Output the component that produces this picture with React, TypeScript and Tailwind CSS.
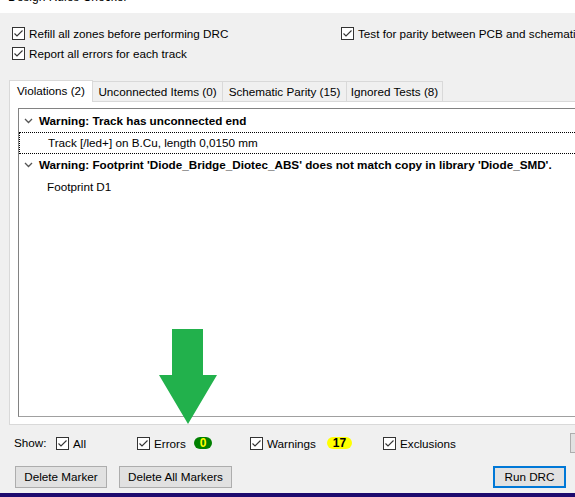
import React from "react";

function Check() {
  return (
    <span className="inline-block w-[13px] h-[13px] border border-[#333333] bg-white shrink-0 relative">
      <svg width="11" height="11" viewBox="0 0 11 11" className="absolute left-0 top-0">
        <path d="M1.5 5.5 L4 8 L9.5 2.5" fill="none" stroke="#333333" strokeWidth="1.1" />
      </svg>
    </span>
  );
}

function CheckItem({ label }: { label: string }) {
  return (
    <div className="flex items-center h-[13px]">
      <Check />
      <span className="ml-[4px] whitespace-nowrap leading-[13px]">{label}</span>
    </div>
  );
}

function Chevron() {
  return (
    <svg width="9" height="6" viewBox="0 0 9 6" className="shrink-0">
      <path d="M1 1 L4.5 4.5 L8 1" fill="none" stroke="#555" strokeWidth="1.3" />
    </svg>
  );
}

function Button({ label, w, active }: { label: string; w: string; active?: boolean }) {
  return (
    <div
      className={
        "h-[22px] flex items-center justify-center bg-[#e1e1e1] whitespace-nowrap " +
        w +
        (active ? " border-2 border-[#0078d7]" : " border border-[#adadad]")
      }
    >
      {label}
    </div>
  );
}

export default function App() {
  return (
    <div
      className="relative w-[575px] h-[497px] overflow-hidden bg-[#f0f0f0] flex flex-col text-[11.7px] text-black"
      style={{ fontFamily: '"Liberation Sans", Arial, sans-serif' }}
    >
      {/* title bar */}
      <div className="h-[13px] bg-white overflow-hidden shrink-0">
        <div className="mt-[-11px] ml-[8px] text-[12px] leading-[16px] whitespace-nowrap">Design Rules Checker</div>
      </div>

      {/* options */}
      <div className="mt-[14px] ml-[12px] grid grid-cols-[329px_1fr] gap-y-[7px] shrink-0">
        <CheckItem label="Refill all zones before performing DRC" />
        <CheckItem label="Test for parity between PCB and schematic" />
        <CheckItem label="Report all errors for each track" />
        <div />
      </div>

      {/* tabs */}
      <div className="mt-[19px] ml-[9px] flex items-end h-[22px] shrink-0">
        <div className="w-[84px] shrink-0 h-[22px] bg-white border border-[#d9d9d9] border-b-0 flex items-center justify-center relative z-10 mb-[-1px] pb-[1px]">
          Violations (2)
        </div>
        <div className="w-[130px] shrink-0 h-[20px] border border-[#d9d9d9] border-l-0 border-b-0 flex items-center justify-center">
          Unconnected Items (0)
        </div>
        <div className="w-[124px] shrink-0 h-[20px] border border-[#d9d9d9] border-l-0 border-b-0 flex items-center justify-center">
          Schematic Parity (15)
        </div>
        <div className="w-[96px] shrink-0 h-[20px] border border-[#d9d9d9] border-l-0 border-b-0 flex items-center justify-center">
          Ignored Tests (8)
        </div>
      </div>

      {/* panel */}
      <div className="ml-[9px] h-[324px] bg-white border border-[#d9d9d9] border-r-0 shrink-0 pt-[6px] pl-[8px]">
        <div className="h-[309px] border border-[#a0a0a0] border-t-[#828282] border-l-[#828282] border-r-0 pt-[1px]">
          <div className="h-[22px] flex items-center pl-[5px] font-bold whitespace-nowrap">
            <Chevron />
            <span className="ml-[6px]">Warning: Track has unconnected end</span>
          </div>
          <div className="h-[22px] flex items-center pl-[28px] whitespace-nowrap border border-dotted border-black border-r-0">
            Track [/led+] on B.Cu, length 0,0150 mm
          </div>
          <div className="h-[22px] flex items-center pl-[5px] font-bold whitespace-nowrap">
            <Chevron />
            <span className="ml-[6px]">
              Warning: Footprint 'Diode_Bridge_Diotec_ABS' does not match copy in library 'Diode_SMD'.
            </span>
          </div>
          <div className="h-[22px] flex items-center pl-[28px] whitespace-nowrap">Footprint D1</div>
        </div>
      </div>

      {/* show row */}
      <div className="mt-[8px] h-[20px] flex items-center shrink-0 whitespace-nowrap">
        <div className="ml-[14px] w-[42px] shrink-0">Show:</div>
        <div className="w-[81px] shrink-0"><CheckItem label="All" /></div>
        <div className="w-[57px] shrink-0"><CheckItem label="Errors" /></div>
        <div className="w-[56px] shrink-0 flex items-center">
          <span className="inline-flex items-center justify-center w-[18px] h-[12px] rounded-full bg-[#008000] text-[#ffff00] font-bold leading-[12px] text-[12px]">
            0
          </span>
        </div>
        <div className="w-[77px] shrink-0"><CheckItem label="Warnings" /></div>
        <div className="w-[56px] shrink-0 flex items-center">
          <span className="inline-flex items-center justify-center w-[25px] h-[12px] rounded-full bg-[#ffff00] text-black font-bold leading-[12px] text-[12px]">
            17
          </span>
        </div>
        <div className="w-[187px] shrink-0"><CheckItem label="Exclusions" /></div>
        <div className="w-[30px] h-[20px] bg-[#e1e1e1] border border-[#adadad] shrink-0" />
      </div>

      {/* buttons */}
      <div className="mt-[13px] flex items-center shrink-0">
        <div className="ml-[15px]"><Button label="Delete Marker" w="w-[92px]" /></div>
        <div className="ml-[12px]"><Button label="Delete All Markers" w="w-[113px]" /></div>
        <div className="ml-auto mr-[9px]"><Button label="Run DRC" w="w-[73px]" active /></div>
      </div>

      <div className="mt-auto h-[4px] bg-[#1d0a6e] shrink-0" />

      {/* green arrow overlay */}
      <svg width="58" height="96" viewBox="0 0 58 96" className="absolute left-[159px] top-[329px]">
        <polygon points="13,0 44,0 44,46 58,46 29,95 0,46 13,46" fill="#22b14c" />
      </svg>
    </div>
  );
}
